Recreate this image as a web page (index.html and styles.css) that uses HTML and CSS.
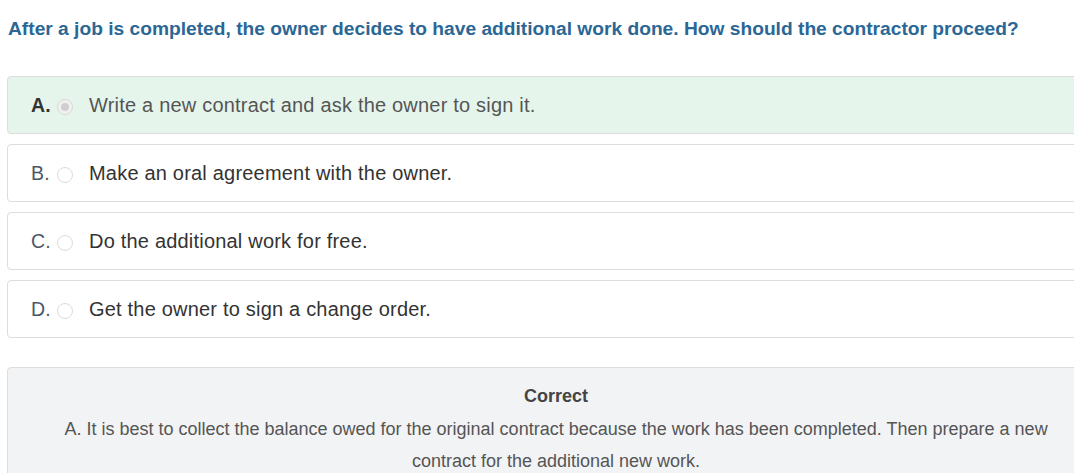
FILE: index.html
```html
<!DOCTYPE html>
<html>
<head>
<meta charset="utf-8">
<link rel="stylesheet" href="styles.css">
</head>
<body>
<div class="quiz">
  <h2 class="question">After a job is completed, the owner decides to have additional work done. How should the contractor proceed?</h2>
  <div class="options">
    <div class="option correct">
      <span class="letter strong">A.</span>
      <span class="radio checked"></span>
      <span class="text">Write a new contract and ask the owner to sign it.</span>
    </div>
    <div class="option">
      <span class="letter">B.</span>
      <span class="radio"></span>
      <span class="text">Make an oral agreement with the owner.</span>
    </div>
    <div class="option">
      <span class="letter">C.</span>
      <span class="radio"></span>
      <span class="text">Do the additional work for free.</span>
    </div>
    <div class="option">
      <span class="letter">D.</span>
      <span class="radio"></span>
      <span class="text">Get the owner to sign a change order.</span>
    </div>
  </div>
  <div class="feedback">
    <div class="feedback-title">Correct</div>
    <p class="feedback-text">A. It is best to collect the balance owed for the original contract because the work has been completed. Then prepare a new contract for the additional new work.</p>
  </div>
</div>
</body>
</html>
```
FILE: styles.css
```css
html, body {
  overflow: hidden;
}
body {
  margin: 0;
  font-family: "Liberation Sans", Arial, sans-serif;
  color: #333;
  background: #fff;
}
.quiz {
  width: 1098px;
  padding: 0 0 0 7px;
}
.question {
  margin: 0;
  padding: 18px 0 0 1px;
  height: 76px;
  box-sizing: border-box;
  font-size: 19.2px;
  font-weight: bold;
  color: #2b6795;
  line-height: 22px;
}
.options {
  display: flex;
  flex-direction: column;
  gap: 10px;
}
.option {
  height: 58px;
  box-sizing: border-box;
  border: 1px solid #ddd;
  border-radius: 4px;
  display: flex;
  align-items: center;
  padding-left: 23px;
  background: #fff;
}
.option.correct {
  background: #e5f5ec;
}
.letter {
  font-size: 19.5px;
  letter-spacing: 0.2px;
  color: #4b5668;
  width: 26px;
}
.letter.strong {
  font-weight: bold;
  color: #333;
}
.radio {
  width: 16px;
  height: 16px;
  border-radius: 50%;
  border: 1px solid #dcdcdc;
  background: #fff;
  box-sizing: border-box;
  position: relative;
  margin-right: 16px;
  margin-top: 4px;
}
.radio.checked {
  background: #f1f1f1;
  border-color: #d8d8d8;
}
.radio.checked::after {
  content: "";
  position: absolute;
  left: 3px;
  top: 3px;
  width: 8px;
  height: 8px;
  border-radius: 50%;
  background: #cfcfcf;
}
.text {
  font-size: 20px;
  letter-spacing: 0.2px;
  color: #333;
}
.option.correct .text {
  color: #555;
}
.feedback {
  margin-top: 29px;
  background: #f2f3f5;
  border: 1px solid #ddd;
  border-radius: 4px;
  padding: 17px 40px 10px;
  text-align: center;
  color: #555;
}
.feedback-title {
  font-size: 18px;
  font-weight: bold;
  line-height: 22px;
  color: #444;
}
.feedback-text {
  margin: 6px 0 0;
  font-size: 18px;
  line-height: 32px;
}
```
